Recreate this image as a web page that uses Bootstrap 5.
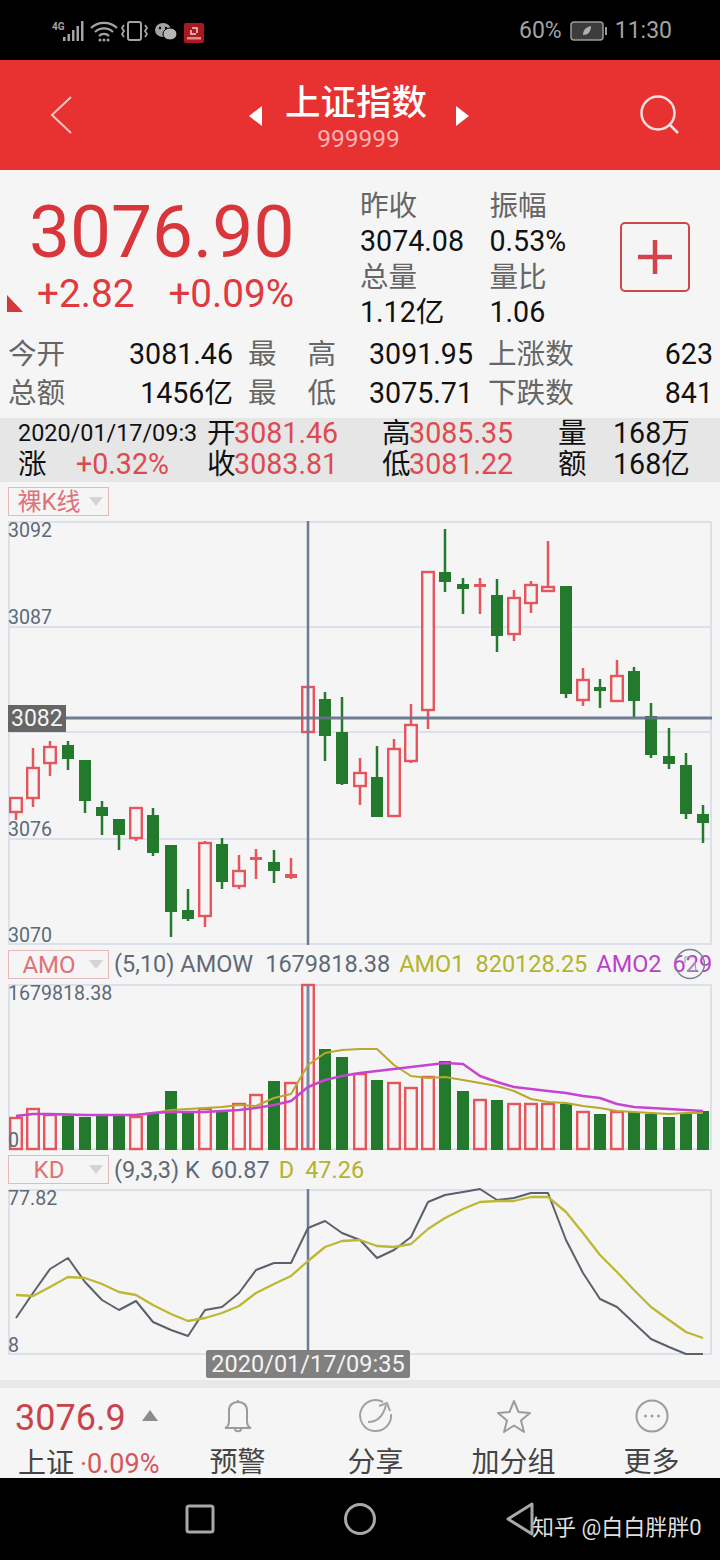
<!DOCTYPE html>
<html lang="zh">
<head>
<meta charset="utf-8">
<title>上证指数</title>
<link href="https://cdn.jsdelivr.net/npm/bootstrap@5.3.0/dist/css/bootstrap.min.css" rel="stylesheet">
<style>
html,body{margin:0;background:#f5f5f5;}
body{width:720px;height:1560px;overflow:hidden;font-family:Roboto,"Noto Sans CJK SC",sans-serif;color:#111;}
.sbar{height:60px;background:#000;color:#a3a3a3;padding:2px 48px 0 52px;font-size:23px;}
.sbar svg{display:block;}
.hdr{height:110px;background:#e83131;padding:4px 40px 0 50px;color:#fff;}
.back-ic{margin-right:6px;margin-top:-4px;}
.search-ic{margin-top:-4px;}
.hdr-title{font-size:35.5px;line-height:42px;font-weight:500;letter-spacing:0;}
.hdr-code{font-size:24.5px;line-height:28px;color:#f7b3b3;margin-top:1px;padding-left:5px;}
.tri-gap-l{margin:24px 23px 0 0;}
.tri-gap-r{margin:24px 0 0 29px;}
.quote{height:165px;padding-top:18px;}
.price-col{width:360px;}
.price{font-size:73px;line-height:88px;color:#d9363c;padding-left:29px;height:88px;}
.chg{font-size:38.7px;line-height:36px;color:#e0393e;white-space:nowrap;}
.corner{margin:0 14px 0 7px;align-self:flex-end;display:block;}
.chg-gap{margin-left:34px;}
.qcol{font-size:28.6px;line-height:35.3px;white-space:nowrap;padding-top:1px;}
.qcol1{width:129.5px;}
.qcol2{width:130.5px;}
.lbl{color:#666;}
.add-btn{width:70px;height:70px;margin-top:34px;border:2px solid #d2444c;border-radius:5px;padding:0;background:transparent;}
.stat{padding:0 7px 5px 8px;font-size:28.6px;line-height:39px;white-space:nowrap;}
.stat-cell{width:225px;}
.stat-wide{width:88px;}
.strip{height:64px;background:#e6e6e6;padding-left:18px;font-size:28.6px;line-height:31px;white-space:nowrap;}
.strip-row{height:31px;}
.c1{width:189px;}.c2{width:175px;}.c3{width:176px;}
.c1-date{font-size:23.4px;}
.c1-lab{width:58px;display:inline-block;}
.c4-lab{width:55px;display:inline-block;}
.rd{color:#dd4a50;margin-left:-1.500px;}
.c1 .rd{margin-left:0;}
.sel-row{height:39px;padding:5px 0 0 8px;font-size:23.5px;white-space:nowrap;color:#5f6a76;}
.sel{width:101px;height:29px;border:1px solid #e8b9ba;color:#e07276;padding-right:5px;flex:none;}
.sel-txt{line-height:27px;padding-top:1px;}
.sel-k{font-size:24px;}
.sel-i{font-size:24px;}
.sel-caret{width:0;height:0;border-left:7px solid transparent;border-right:7px solid transparent;border-top:9px solid #d4d4d4;}
.ind{margin-left:5px;line-height:27px;padding-top:1px;}
.ind-kd{padding-top:2px;}
.yl{color:#b3b32c;}.mg{color:#bb3fcb;}
.ml8{margin-left:9px;}.ml10{margin-left:11px;}
.ml11{margin-left:12px;}
.chart svg{display:block;overflow:visible;}
.datetag{left:206px;top:161px;width:204px;height:28px;line-height:28px;background:#808080;color:#f4f4f4;font-size:23.5px;text-align:center;border-radius:2px;}
.ring{left:675px;top:3px;}
.band{height:8px;background:#e9e9e9;margin-top:25px;}
.tool{height:90px;}
.tool-l{width:168px;padding-left:15px;}
.tool-price{font-size:36px;line-height:44px;color:#c9444a;height:55px;padding-top:4px;margin-bottom:6px;}
.tool-sub{font-size:28px;line-height:30px;color:#444;white-space:nowrap;margin-left:3px;}
.tool-sub .pc{color:#d4575c;font-size:27px;margin-left:6px;}
.tool-tri{margin-top:-4px;}
.tool-it{width:138px;padding-top:11px;padding-left:1px;text-align:center;}
.tool-it svg{display:block;margin:0 auto;}
.tool-lab{font-size:28px;line-height:30px;color:#444;margin-top:15px;}
.nav-bar{height:82px;background:#000;padding-left:185px;gap:129px;}
.wm{left:532px;top:36px;color:#dedede;font-size:22px;line-height:28px;white-space:nowrap;}
</style>
</head>
<body>
<div class="sbar d-flex align-items-center justify-content-between">
  <div class="d-flex align-items-center">
    <svg width="152" height="24" viewBox="52 18 152 24">
      <text x="52" y="29" font-size="10" fill="#a3a3a3" font-family="Roboto" font-weight="700">4G</text>
      <g fill="#a3a3a3"><rect x="63" y="36" width="2.500" height="4"/><rect x="67.500" y="33" width="2.500" height="7"/><rect x="72" y="29" width="2.500" height="11"/><rect x="76.500" y="25" width="2.500" height="15"/><rect x="81" y="20" width="2.500" height="20"/></g>
      <g fill="none" stroke="#a3a3a3" stroke-width="2.200"><path d="M91 27a19 19 0 0 1 26 0"/><path d="M95 31a13 13 0 0 1 18 0"/><path d="M99 35a7 7 0 0 1 10 0"/></g>
      <circle cx="100" cy="39" r="1.500" fill="#a3a3a3"/><circle cx="104" cy="39" r="1.500" fill="#a3a3a3"/><circle cx="108" cy="39" r="1.500" fill="#a3a3a3"/>
      <rect x="128" y="21" width="13" height="18" rx="2" fill="none" stroke="#a3a3a3" stroke-width="2"/>
      <path d="M124 24l-2 3 2 3-2 3 2 3M145 24l2 3-2 3 2 3-2 3" fill="none" stroke="#a3a3a3" stroke-width="1.800"/>
      <ellipse cx="163" cy="29" rx="8" ry="7" fill="#a3a3a3"/><ellipse cx="170" cy="33" rx="7" ry="6" fill="#b5b5b5" stroke="#000"/>
      <circle cx="160" cy="27" r="1.200" fill="#000"/><circle cx="166" cy="27" r="1.200" fill="#000"/>
      <rect x="184" y="22" width="20" height="20" rx="2" fill="#a81a22"/>
      <path d="M192 27h5v5M196 33h-5v-4" fill="none" stroke="#f0d0d0" stroke-width="1.500"/><rect x="187" y="36" width="14" height="2.500" fill="#e08a8a"/>
    </svg>
  </div>
  <div class="d-flex align-items-center">
    <span>60%</span>
    <svg class="mx-2" width="37" height="20" viewBox="0 0 37 20"><rect x="1" y="1" width="32" height="18" rx="3" fill="#3c3c3c" stroke="#9a9a9a" stroke-width="1.500"/><rect x="35" y="6" width="2" height="8" fill="#9a9a9a"/><path d="M13 14c0-5 3-8 8-9 0 6-3 9-8 9z" fill="#b0b0b0"/></svg>
    <span>11:30</span>
  </div>
</div>

<div class="hdr d-flex align-items-center">
  <svg class="back-ic" width="22" height="40" viewBox="0 0 22 40"><path d="M21 2L2 20l19 18" fill="none" stroke="#f7c4c4" stroke-width="2"/></svg>
  <div class="flex-grow-1 d-flex justify-content-center">
    <svg class="tri-gap-l" width="13" height="20" viewBox="0 0 13 20"><path d="M13 0v20L0 10z" fill="#fff"/></svg>
    <div class="text-center">
      <div class="hdr-title">上证指数</div>
      <div class="hdr-code">999999</div>
    </div>
    <svg class="tri-gap-r" width="13" height="20" viewBox="0 0 13 20"><path d="M0 0v20l13-10z" fill="#fff"/></svg>
  </div>
  <svg class="search-ic" width="40" height="40" viewBox="0 0 40 40"><circle cx="18" cy="18" r="16.500" fill="none" stroke="#fbdede" stroke-width="2.500"/><path d="M30 30l8 8" stroke="#fbdede" stroke-width="2.500"/></svg>
</div>

<div class="quote d-flex">
  <div class="price-col">
    <div class="price">3076.90</div>
    <div class="d-flex chg">
      <svg class="corner" width="16" height="17" viewBox="0 0 16 17"><path d="M0 0l16 17H0z" fill="#d9363c"/></svg>
      <span>+2.82</span><span class="chg-gap">+0.09%</span>
    </div>
  </div>
  <div class="qcol qcol1"><div class="lbl">昨收</div><div>3074.08</div><div class="lbl">总量</div><div>1.12亿</div></div>
  <div class="qcol qcol2"><div class="lbl">振幅</div><div>0.53%</div><div class="lbl">量比</div><div>1.06</div></div>
  <button class="btn add-btn d-flex align-items-center justify-content-center" type="button" aria-label="加">
    <svg width="36" height="36" viewBox="0 0 36 36"><path d="M18 1v34M1 18h34" stroke="#d2444c" stroke-width="4.500"/></svg>
  </button>
</div>

<div class="stat">
  <div class="d-flex justify-content-between">
    <div class="stat-cell d-flex justify-content-between"><span class="lbl">今开</span><span>3081.46</span></div>
    <div class="stat-cell d-flex justify-content-between"><span class="lbl stat-wide d-flex justify-content-between"><span>最</span><span>高</span></span><span>3091.95</span></div>
    <div class="stat-cell d-flex justify-content-between"><span class="lbl">上涨数</span><span>623</span></div>
  </div>
  <div class="d-flex justify-content-between">
    <div class="stat-cell d-flex justify-content-between"><span class="lbl">总额</span><span>1456亿</span></div>
    <div class="stat-cell d-flex justify-content-between"><span class="lbl stat-wide d-flex justify-content-between"><span>最</span><span>低</span></span><span>3075.71</span></div>
    <div class="stat-cell d-flex justify-content-between"><span class="lbl">下跌数</span><span>841</span></div>
  </div>
</div>

<div class="strip">
  <div class="strip-row d-flex">
    <div class="c1 c1-date">2020/01/17/09:3</div>
    <div class="c2">开<span class="rd">3081.46</span></div>
    <div class="c3">高<span class="rd">3085.35</span></div>
    <div><span class="c4-lab">量</span>168万</div>
  </div>
  <div class="strip-row d-flex">
    <div class="c1"><span class="c1-lab">涨</span><span class="rd">+0.32%</span></div>
    <div class="c2">收<span class="rd">3083.81</span></div>
    <div class="c3">低<span class="rd">3081.22</span></div>
    <div><span class="c4-lab">额</span>168亿</div>
  </div>
</div>

<div class="sel-row d-flex">
  <div class="sel d-flex align-items-center"><div class="flex-grow-1 text-center sel-txt sel-k">裸K线</div><div class="sel-caret"></div></div>
</div>
<div class="chart"><svg id="kline" width="720" height="424" viewBox="0 521 720 424"></svg></div>

<div class="sel-row d-flex position-relative">
  <div class="sel d-flex align-items-center"><div class="flex-grow-1 text-center sel-txt sel-i">AMO</div><div class="sel-caret"></div></div>
  <div class="ind">(5,10) AMOW<span class="ml11">1679818.38</span><span class="yl ml8">AMO1</span><span class="yl ml10">820128.25</span><span class="mg ml8">AMO2</span><span class="mg ml10">629</span></div>
  <svg class="ring position-absolute" width="30" height="32" viewBox="0 0 30 32"><circle cx="15" cy="16" r="14.500" fill="none" stroke="#77829a" stroke-width="1.500"/><path d="M10 9h8M10 9v6M21 23h-8l7-8z" fill="none" stroke="#9aa3b4" stroke-width="1.200"/></svg>
</div>
<div class="chart"><svg id="amo" width="720" height="166" viewBox="0 984 720 166"></svg></div>

<div class="sel-row d-flex">
  <div class="sel d-flex align-items-center"><div class="flex-grow-1 text-center sel-txt sel-i">KD</div><div class="sel-caret"></div></div>
  <div class="ind ind-kd">(9,3,3) K<span class="ml10">60.87</span><span class="yl ml8">D</span><span class="yl ml10">47.26</span></div>
</div>
<div class="chart position-relative">
  <svg id="kd" width="720" height="166" viewBox="0 1189 720 166"></svg>
  <div class="datetag position-absolute">2020/01/17/09:35</div>
</div>

<div class="band"></div>
<div class="tool d-flex">
  <div class="tool-l">
    <div class="tool-price d-flex align-items-center">3076.9<svg class="ms-3 tool-tri" width="16" height="11" viewBox="0 0 16 11"><path d="M8 0l8 11H0z" fill="#8c8c8c"/></svg></div>
    <div class="tool-sub">上证<span class="pc">·0.09%</span></div>
  </div>
  <div class="tool-it">
    <svg width="30" height="34" viewBox="0 0 30 34"><path d="M2 29c3-1 4-3 4-7V11c0-5 4-8 9-8s9 3 9 8v11c0 4 1 6 4 7zM15 1v2M12 30c0 3 6 3 6 0" fill="none" stroke="#9c9c9c" stroke-width="2"/></svg>
    <div class="tool-lab">预警</div>
  </div>
  <div class="tool-it">
    <svg width="34" height="34" viewBox="0 0 34 34"><path d="M24 3a15.500 15.500 0 1 0 8 12" fill="none" stroke="#a2a2a2" stroke-width="2"/><path d="M9 23c8 0 15-5 18-17M20 7l8-3 3 8" fill="none" stroke="#a2a2a2" stroke-width="2"/></svg>
    <div class="tool-lab">分享</div>
  </div>
  <div class="tool-it">
    <svg width="34" height="34" viewBox="0 0 34 34"><path d="M17 2l4.500 11 11.500 1-9 7.500 3 11.500-10-6.500-10 6.500 3-11.500L1 14l11.500-1z" fill="none" stroke="#9c9c9c" stroke-width="2" stroke-linejoin="round"/></svg>
    <div class="tool-lab">加分组</div>
  </div>
  <div class="tool-it">
    <svg width="34" height="34" viewBox="0 0 34 34"><circle cx="17" cy="17" r="15.500" fill="none" stroke="#9c9c9c" stroke-width="2"/><circle cx="10.500" cy="17" r="1.500" fill="#9c9c9c"/><circle cx="17" cy="17" r="1.500" fill="#9c9c9c"/><circle cx="23.500" cy="17" r="1.500" fill="#9c9c9c"/></svg>
    <div class="tool-lab">更多</div>
  </div>
</div>

<div class="nav-bar d-flex align-items-center position-relative">
  <svg width="30" height="30" viewBox="0 0 30 30"><rect x="2" y="2" width="26" height="26" rx="2" fill="none" stroke="#a8a8a8" stroke-width="3"/></svg>
  <svg width="32" height="32" viewBox="0 0 32 32"><circle cx="16" cy="16" r="14.500" fill="none" stroke="#a8a8a8" stroke-width="3"/></svg>
  <svg width="30" height="34" viewBox="0 0 30 34"><path d="M27 2v30L3 17z" fill="none" stroke="#a8a8a8" stroke-width="3" stroke-linejoin="round"/></svg>
  <div class="wm position-absolute">知乎 @白白胖胖0</div>
</div>

<script>
var RED="#e6545c",GRN="#237a2d";
// [cx, wickTop, wickBottom, bodyTop, bodyBottom, isRed]
var C=[
[16,798,820,798,812,1],[33,748,807,768,798,1],[50,741,776,747,763,1],[68,741,770,745,759,0],
[85,760,813,760,801,0],[102,801,835,807,816,0],[119,819,850,819,835,0],[136,808,841,808,838,1],
[153,808,856,815,853,0],[171,845,937,845,912,0],[188,889,921,910,919,0],[205,841,927,843,916,1],
[222,838,889,844,882,0],[239,855,889,871,886,1],[256,849,879,857,860,2],[274,850,883,862,871,0],
[291,858,879,874,878,2],[308,687,732,687,732,1],[325,692,761,699,736,0],[342,697,785,732,784,0],
[360,758,805,773,786,1],[377,746,817,777,817,0],[394,739,817,749,816,1],[411,704,763,725,761,1],
[428,572,729,572,710,1],[445,529,592,572,582,0],[463,578,614,584,589,0],[480,578,614,584,587,2],
[497,579,652,595,636,0],[514,590,641,598,634,1],[531,581,613,585,603,1],[548,541,591,587,591,1],
[566,586,698,586,694,0],[583,668,706,680,700,1],[600,679,708,687,691,0],[617,660,701,676,701,1],
[634,667,717,671,701,0],[651,703,758,716,755,0],[669,728,769,756,764,0],[686,753,819,765,814,0],
[703,805,843,814,823,0]];
var V=[1117,1108,1114,1116,1117,1116,1115,1116,1113,1091,1112,1108,1111,1103,1094,1081,1082,984,1049,1057,1073,1080,1082,1087,1076,1061,1091,1099,1100,1103,1103,1103,1104,1111,1114,1111,1112,1114,1117,1114,1111];
var VR=[1,1,1,0,0,0,0,1,0,0,0,1,0,1,1,0,1,1,0,0,1,0,1,1,1,0,0,1,0,1,1,1,0,1,0,1,0,0,0,0,0];
var XS=C.map(function(c){return c[0];});
function poly(ys,col,w){return '<polyline fill="none" stroke="'+col+'" stroke-width="'+w+'" stroke-linejoin="round" points="'+ys.map(function(y,i){return XS[i]+','+y;}).join(' ')+'"/>';}
function grid(t,b,ys){var s='<rect x="9" y="'+(t+1)+'" width="702" height="'+(b-t-2)+'" fill="none" stroke="#dde0ea" stroke-width="2"/>';ys.forEach(function(y){s+='<line x1="9" x2="711" y1="'+y+'" y2="'+y+'" stroke="#dde0ea" stroke-width="2"/>';});return s;}
function lab(x,y,t,c,fs){return '<text x="'+x+'" y="'+y+'" font-family="Roboto" font-size="'+(fs||19.6)+'" fill="'+(c||'#5d6a78')+'">'+t+'</text>';}
var s=grid(521,945,[627,732,839]);
C.forEach(function(c){
  var col=c[5]?RED:GRN;
  s+='<line x1="'+c[0]+'" x2="'+c[0]+'" y1="'+c[1]+'" y2="'+c[2]+'" stroke="'+col+'" stroke-width="2.500"/>';
  if(c[5]==1){s+='<rect x="'+(c[0]-5.8)+'" y="'+c[3]+'" width="11.600" height="'+(c[4]-c[3])+'" fill="'+(c[0]==308?'none':'#f5f5f5')+'" stroke="'+col+'" stroke-width="2.400"/>';}
  else{s+='<rect x="'+(c[0]-6)+'" y="'+c[3]+'" width="12" height="'+(c[4]-c[3])+'" fill="'+col+'"/>';}
});
s+='<line x1="308" x2="308" y1="521" y2="945" stroke="#6d7c94" stroke-width="2.500"/>';
s+='<line x1="66" x2="712" y1="718" y2="718" stroke="#66738a" stroke-width="2.800" opacity=".92"/>';
s+=lab(8,537,'3092')+lab(8,624,'3087')+lab(8,836,'3076')+lab(8,942,'3070');
s+='<rect x="8" y="705" width="58" height="27" fill="#666"/>'+lab(11,726,'3082','#f4f4f4',23);
document.getElementById('kline').innerHTML=s;

var y1=[1116,1114,1114,1115,1115,1115,1115,1115,1113,1110,1109,1108,1107,1105,1106,1098,1094,1065,1053,1050,1049,1049,1065,1076,1078,1077,1080,1083,1086,1091,1099,1102,1103,1106,1108,1111,1112,1113,1114,1113,1113];
var y2=[1116,1114,1114,1114.5,1115,1115,1115,1115,1113,1112,1112,1112,1111,1110,1108,1105,1101,1087,1080,1076,1073,1071,1069,1067,1065,1063,1064,1076,1082,1087,1089,1091,1093,1096,1098,1104,1107,1108,1109,1110,1111];
s=grid(984,1150,[]);
s+='<line x1="308" x2="308" y1="984" y2="1150" stroke="#7a88a4" stroke-width="3"/>';
V.forEach(function(y,i){
  var x=XS[i];
  if(VR[i]){s+='<rect x="'+(x-5.8)+'" y="'+(y+1)+'" width="11.600" height="'+(1149-y-1)+'" fill="none" stroke="'+RED+'" stroke-width="2.400"/>';}
  else{s+='<rect x="'+(x-6)+'" y="'+y+'" width="12" height="'+(1150-y)+'" fill="'+GRN+'"/>';}
});
s+=poly(y1,'#b8a92e',2)+poly(y2,'#c645d0',2.500);
s+=lab(8,1000,'1679818.38')+lab(8,1147,'0');
document.getElementById('amo').innerHTML=s;

var k=[1318,1293,1269,1258,1282,1300,1310,1301,1322,1330,1336,1310,1307,1293,1270,1263,1263,1228,1221,1233,1240,1258,1250,1237,1202,1195,1192,1189,1200,1198,1193,1193,1240,1273,1299,1307,1323,1339,1347,1354,1354];
var d=[1295,1296,1287,1277,1278,1284,1292,1295,1305,1314,1321,1318,1313,1306,1293,1284,1276,1261,1247,1241,1240,1246,1247,1244,1229,1218,1209,1202,1201,1201,1197,1197,1212,1233,1255,1272,1290,1307,1320,1332,1338];
s=grid(1189,1355,[]);
s+='<line x1="308" x2="308" y1="1189" y2="1355" stroke="#6d7c94" stroke-width="2.500"/>';
s+=poly(k,'#5a616b',2)+poly(d,'#bdb833',2.300);
s+=lab(8,1205,'77.82')+lab(8,1352,'8');
document.getElementById('kd').innerHTML=s;
</script>
<script src="https://cdn.jsdelivr.net/npm/bootstrap@5.3.0/dist/js/bootstrap.bundle.min.js"></script>
</body>
</html>
